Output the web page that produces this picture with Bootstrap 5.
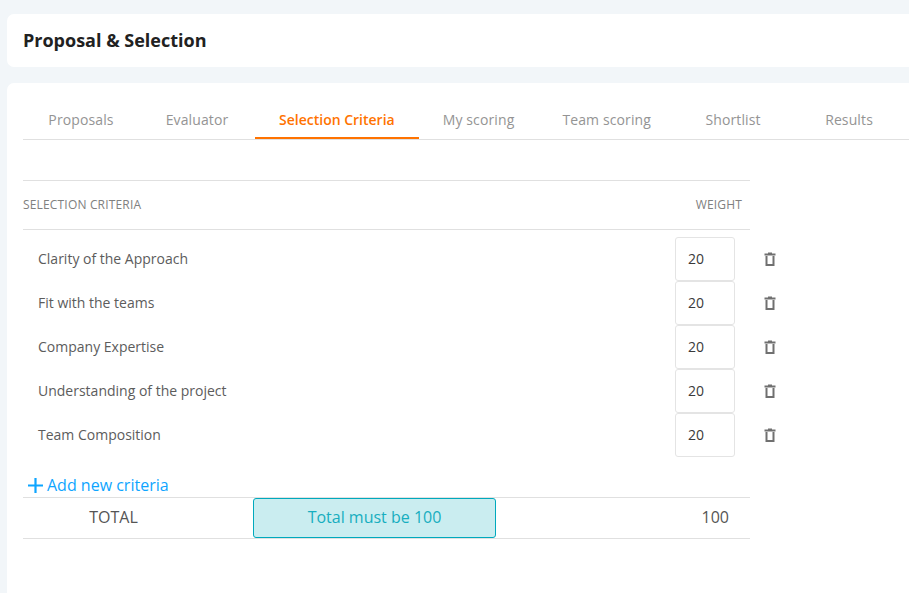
<!DOCTYPE html>
<html lang="en"><head><meta charset="utf-8"><title>Proposal &amp; Selection</title>
<link href="https://cdn.jsdelivr.net/npm/bootstrap@5.3.0/dist/css/bootstrap.min.css" rel="stylesheet">
<style>
html,body{height:100%;overflow:hidden}
body{background:#f2f6f9;font-family:"Open Sans",sans-serif;font-size:14px;color:#5c5c5c;padding:14px 0 0 7px}
.head-box{background:#fff;border-radius:7px 0 0 7px;height:53px;padding:0 16px;margin-bottom:16px}
.head-box h1{font-size:18px;font-weight:700;color:#212121;margin:0}
.main-box{background:#fff;border-radius:7px 0 0 0;height:520px;padding:16px 0 0 16px}
.tab-row{border-bottom:1px solid #e0e0e0;height:41px;margin-bottom:40px}
.tab-item{min-width:116px;height:40px;padding:0 24px;color:#949494;text-align:center;line-height:41px;text-decoration:none;white-space:nowrap;letter-spacing:.12px}
.tab-item.on{color:#ff7300;font-weight:600;letter-spacing:0;border-bottom:2px solid #ff7300}
.crit-area{width:727px}
.crit-head{height:50px;border-top:1px solid #e0e0e0;border-bottom:1px solid #e0e0e0;font-size:12px;color:#808080;padding-right:8px;margin-bottom:7px;letter-spacing:.17px}
.crit-row{height:44px;padding-left:15px}
.crit-name{padding-bottom:2px}
.crit-box{width:60px;height:44px;border:1px solid #e4e4e4;border-radius:3px;padding:0 12px 2px;color:#3a3a3a;font-size:14px;font-family:inherit;outline:0;margin-right:15px}
.crit-trash{position:relative;width:0;overflow:visible}
.crit-trash svg{display:block;margin-left:14px}
.add-link{color:#0ea5ff;font-size:16px;text-decoration:none;margin:16px 0 0 5px;height:24px;line-height:24px}
.add-link svg{margin-right:4px}
.total-row{height:42px;border-top:1px solid #e0e0e0;border-bottom:1px solid #e0e0e0;font-size:16px;color:#555}
.total-lbl{width:230px;padding:0 49px 2px 0;text-align:center}
.total-msg{width:243px;height:40px;background:#caedf0;border:1px solid #00a9bd;border-radius:3px;color:#17aebf;text-align:center;line-height:37px}
.total-val{padding:0 21px 2px 0}
</style></head>
<body>
<div class="head-box d-flex align-items-center"><h1>Proposal &amp; Selection</h1></div>
<div class="main-box">
  <nav class="tab-row d-flex">
    <a class="tab-item" href="#">Proposals</a>
    <a class="tab-item" href="#">Evaluator</a>
    <a class="tab-item on" href="#">Selection Criteria</a>
    <a class="tab-item" href="#">My scoring</a>
    <a class="tab-item" href="#">Team scoring</a>
    <a class="tab-item" href="#">Shortlist</a>
    <a class="tab-item" href="#">Results</a>
  </nav>
  <div class="crit-area">
    <div class="crit-head d-flex justify-content-between align-items-center"><span>SELECTION CRITERIA</span><span>WEIGHT</span></div>
    <div class="crit-row d-flex align-items-center"><span class="crit-name flex-grow-1">Clarity of the Approach</span><input class="crit-box" value="20" aria-label="Weight"><span class="crit-trash"><svg width="12" height="14" viewBox="0 0 12 14"><path d="M4 0.500h4v1h3.500v2H.5v-2H4z" fill="#707070"/><path d="M2.500 4v9h7V4" fill="none" stroke="#707070" stroke-width="2"/></svg></span></div>
    <div class="crit-row d-flex align-items-center"><span class="crit-name flex-grow-1">Fit with the teams</span><input class="crit-box" value="20" aria-label="Weight"><span class="crit-trash"><svg width="12" height="14" viewBox="0 0 12 14"><path d="M4 0.500h4v1h3.500v2H.5v-2H4z" fill="#707070"/><path d="M2.500 4v9h7V4" fill="none" stroke="#707070" stroke-width="2"/></svg></span></div>
    <div class="crit-row d-flex align-items-center"><span class="crit-name flex-grow-1">Company Expertise</span><input class="crit-box" value="20" aria-label="Weight"><span class="crit-trash"><svg width="12" height="14" viewBox="0 0 12 14"><path d="M4 0.500h4v1h3.500v2H.5v-2H4z" fill="#707070"/><path d="M2.500 4v9h7V4" fill="none" stroke="#707070" stroke-width="2"/></svg></span></div>
    <div class="crit-row d-flex align-items-center"><span class="crit-name flex-grow-1">Understanding of the project</span><input class="crit-box" value="20" aria-label="Weight"><span class="crit-trash"><svg width="12" height="14" viewBox="0 0 12 14"><path d="M4 0.500h4v1h3.500v2H.5v-2H4z" fill="#707070"/><path d="M2.500 4v9h7V4" fill="none" stroke="#707070" stroke-width="2"/></svg></span></div>
    <div class="crit-row d-flex align-items-center"><span class="crit-name flex-grow-1">Team Composition</span><input class="crit-box" value="20" aria-label="Weight"><span class="crit-trash"><svg width="12" height="14" viewBox="0 0 12 14"><path d="M4 0.500h4v1h3.500v2H.5v-2H4z" fill="#707070"/><path d="M2.500 4v9h7V4" fill="none" stroke="#707070" stroke-width="2"/></svg></span></div>
    <a class="add-link d-flex align-items-center" href="#"><svg width="15" height="15" viewBox="0 0 15 15"><path d="M7.500 0v15M0 7.500h15" stroke="#0ea5ff" stroke-width="2.200"/></svg>Add new criteria</a>
    <div class="total-row d-flex align-items-center justify-content-between"><span class="total-lbl">TOTAL</span><span class="total-msg">Total must be 100</span><span class="total-val ms-auto">100</span></div>
  </div>
</div>
</body></html>
